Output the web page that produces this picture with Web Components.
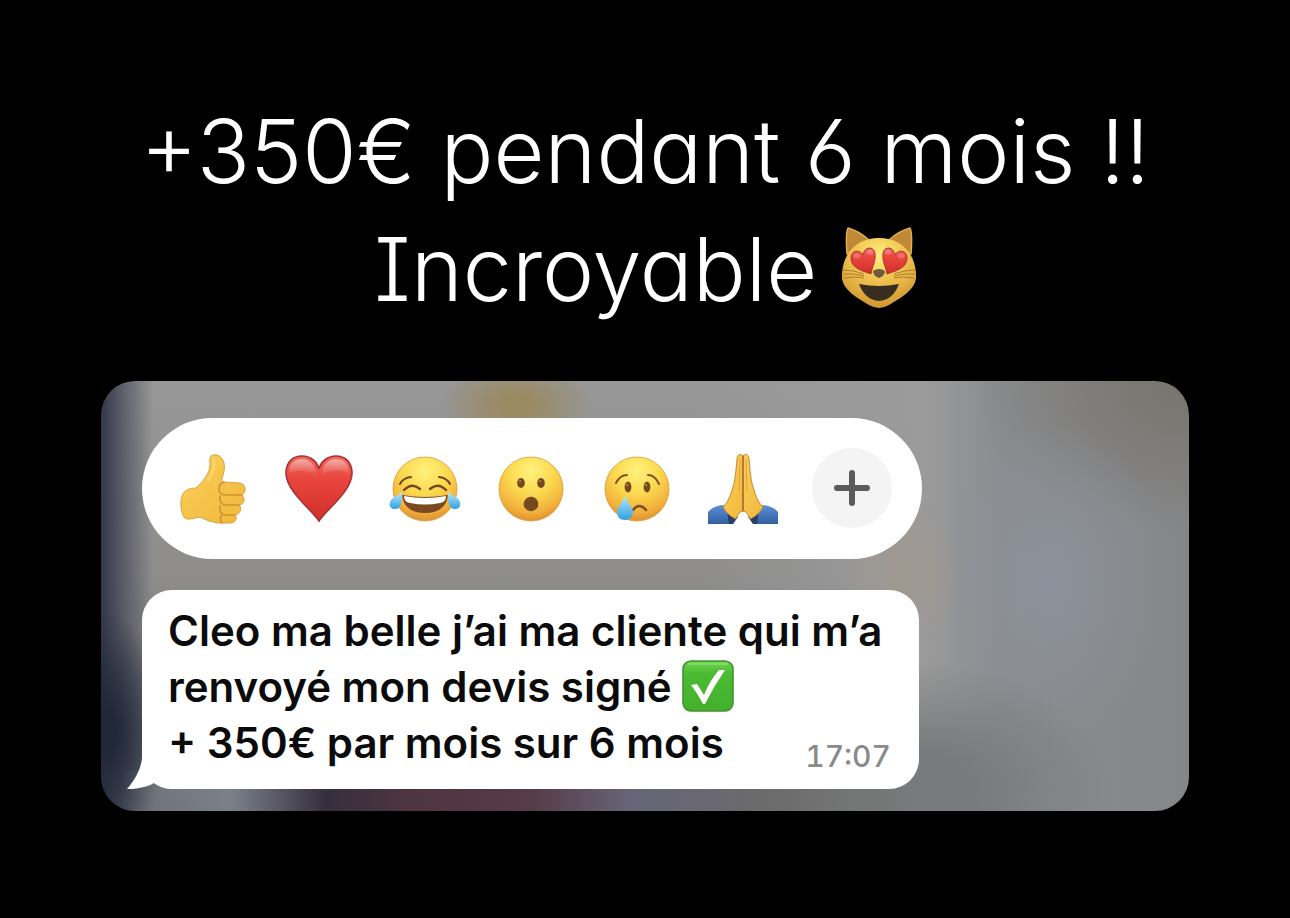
<!DOCTYPE html>
<html lang="fr">
<head>
<meta charset="utf-8">
<meta name="viewport" content="width=device-width, initial-scale=1">
<title>+350€ pendant 6 mois !!</title>
<style>
  body {
    margin: 0;
    background: #000;
  }
</style>
</head>
<body>
<story-page>
  <story-title slot="title">+350€ pendant 6 mois !!<br>Incroyable <emoji-icon name="cat" label="Chat aux yeux en cœur"></emoji-icon></story-title>
  <message-card>
    <reaction-bar></reaction-bar>
    <chat-bubble time="17:07">Cleo ma belle j’ai ma cliente qui m’a<br>renvoyé mon devis signé <emoji-icon name="check" label="Validé"></emoji-icon><br>+ 350€ par mois sur 6 mois</chat-bubble>
  </message-card>
</story-page>

<script>
/* Shared gradients, cloned into every icon's own shadow root */
const DEFS = `
  <defs>
    <radialGradient id="face" cx="50%" cy="22%" r="80%">
      <stop offset="0" stop-color="#fff27c"/>
      <stop offset=".45" stop-color="#fbd84e"/>
      <stop offset=".8" stop-color="#f2b03c"/>
      <stop offset="1" stop-color="#dc8b2c"/>
    </radialGradient>
    <radialGradient id="fur" cx="50%" cy="25%" r="75%">
      <stop offset="0" stop-color="#fff083"/>
      <stop offset=".4" stop-color="#f3ca55"/>
      <stop offset="1" stop-color="#cf962f"/>
    </radialGradient>
    <linearGradient id="red" x1="0" y1="0" x2="0" y2="1">
      <stop offset="0" stop-color="#ee6b62"/>
      <stop offset=".35" stop-color="#e9463e"/>
      <stop offset="1" stop-color="#cf2f2a"/>
    </linearGradient>
    <linearGradient id="gloss" x1="0" y1="0" x2="0" y2="1">
      <stop offset="0" stop-color="#fff" stop-opacity=".45"/>
      <stop offset="1" stop-color="#fff" stop-opacity="0"/>
    </linearGradient>
    <linearGradient id="hand" x1="0" y1="0" x2="1" y2="1">
      <stop offset="0" stop-color="#fbd05a"/>
      <stop offset="1" stop-color="#f1b73c"/>
    </linearGradient>
    <linearGradient id="tear" x1="0" y1="0" x2="0" y2="1">
      <stop offset="0" stop-color="#b9ecfb"/>
      <stop offset="1" stop-color="#2f9fe0"/>
    </linearGradient>
    <linearGradient id="sleeve" x1="0" y1="0" x2="0" y2="1">
      <stop offset="0" stop-color="#5c8fd8"/>
      <stop offset="1" stop-color="#32609f"/>
    </linearGradient>
    <linearGradient id="green" x1="0" y1="0" x2="0" y2="1">
      <stop offset="0" stop-color="#6fd54f"/>
      <stop offset=".25" stop-color="#4bbb33"/>
      <stop offset="1" stop-color="#43b02c"/>
    </linearGradient>
  </defs>`;

const ICONS = {
  thumb: `
    <path fill="url(#hand)" stroke="#d9a33a" stroke-width="1" stroke-linejoin="round" d="M7 43C4 48 4 59 8 66Q10 69 14 68L24 66Q33 71 42 72L55 72C61 71 61 66 59 64C65 63 66 56 63 54C69 53 69 47 66 44C71 41 70 32 63 32L47 31Q45 30 46 27C48 22 49 17 48 12C46 5 41 3 37 4C33 5 34 9 34 14C34 22 27 31 20 37Q10 37 7 43Z"/>
    <g fill="none" stroke="#cf9430" stroke-width="1.6" stroke-linecap="round">
      <path d="M66 44H49Q43 43 43 38Q43 33 48 31"/>
      <path d="M63 54H49Q43 53 44 45"/>
      <path d="M59 64H49Q43 63 44 55"/>
      <path d="M46 72Q43 68 46 64"/>
    </g>
    <path d="M38 8Q39 20 32 29" fill="none" stroke="#ffe17d" stroke-width="3" stroke-linecap="round" opacity=".5"/>`,
  heart: `
    <path d="M37 70C29 58 4 40 4 22C4 11 11 5 20 5C28 5 35 10 37 18C39 10 46 5 54 5C63 5 70 11 70 22C70 40 45 58 37 70Z" fill="url(#red)" stroke="#a92f32" stroke-width="1.6"/>
    <path d="M7 22C7 11 14 8 20 8C28 8 33 14 35 24Q20 16 7 22Z" fill="url(#gloss)"/>
    <path d="M39 24C41 14 46 8 54 8C60 8 67 11 67 22Q54 16 39 24Z" fill="url(#gloss)"/>`,
  joy: `
    <circle cx="37" cy="38" r="32" fill="url(#face)" stroke="#d99a38" stroke-width=".8"/>
    <g fill="none" stroke="#74461d" stroke-linecap="round">
      <path d="M12 33Q15 27 23 26M51 26Q59 27 62 33" stroke-width="2"/>
      <path d="M16 39Q24 31 32 38M42 38Q50 31 58 39" stroke-width="2.4"/>
    </g>
    <path d="M14 44Q37 48 60 44Q58 62 37 62Q16 62 14 44Z" fill="#7a4a22"/>
    <path d="M16 45Q37 49 58 45Q58 51 52 52Q37 55 22 52Q16 51 16 45Z" fill="#fff"/>
    <path d="M14 41C14 50 14 58 7 58C0 58 0 50 6 46Q11 44 14 41Z" fill="url(#tear)"/>
    <path d="M60 41C60 50 60 58 67 58C74 58 74 50 68 46Q63 44 60 41Z" fill="url(#tear)"/>`,
  wow: `
    <circle cx="37" cy="38" r="32" fill="url(#face)" stroke="#d99a38" stroke-width=".8"/>
    <g fill="#74491d">
      <ellipse cx="27" cy="32" rx="3.8" ry="5"/>
      <ellipse cx="47" cy="32" rx="3.8" ry="5"/>
      <ellipse cx="37" cy="53" rx="7.4" ry="7.2"/>
    </g>
    <g fill="#a87634"><circle cx="26" cy="30" r="1.3"/><circle cx="46" cy="30" r="1.3"/></g>`,
  cry: `
    <circle cx="37" cy="38" r="32" fill="url(#face)" stroke="#d99a38" stroke-width=".8"/>
    <g fill="none" stroke="#7b5120" stroke-width="2" stroke-linecap="round">
      <path d="M16 32Q20 24 27 24M48 24Q55 24 59 33"/>
      <path d="M33 59Q39 51 46 59" stroke-width="2.6"/>
    </g>
    <g fill="#74491d"><ellipse cx="28" cy="36" rx="3.4" ry="5.4"/><ellipse cx="47" cy="36" rx="3.4" ry="5.4"/></g>
    <g fill="#b17d38"><circle cx="27" cy="34" r="1.2"/><circle cx="46" cy="34" r="1.2"/></g>
    <path d="M25 44C26 50 33 56 33 61C33 66 29 69 25 69C20 69 17 66 17 61C17 55 24 50 25 44Z" fill="url(#tear)"/>`,
  pray: `
    <path d="M2 61Q8 54 19 54L29 65L27 73H2Z" fill="url(#sleeve)"/>
    <path d="M72 61Q66 54 55 54L45 65L47 73H72Z" fill="url(#sleeve)"/>
    <path d="M21 60L32 66L27 73H23ZM53 60L42 66L47 73H51Z" fill="#253f66"/>
    <g fill="url(#hand)" stroke="#c8872c" stroke-width="1">
      <path d="M37 5C34 2 31 4 31 8C30 20 29 30 27 36C24 46 22 51 17 56Q21 64 30 68Q32 61 37 60Z"/>
      <path d="M37 5C40 2 43 4 43 8C44 20 45 30 47 36C50 46 52 51 57 56Q53 64 44 68Q42 61 37 60Z"/>
    </g>
    <path d="M37 5V60" stroke="#a9682a" stroke-width="1.4" fill="none"/>
    <path d="M34 8L33 40M40 8L41 40" stroke="#d99b38" stroke-width=".8" fill="none"/>`,
  cat: `
    <g fill="#c08937" stroke="#e0ae4c" stroke-width="1.5" stroke-linejoin="round">
      <path d="M5 27C4 14 4 5 6 1Q17 4 27 13Z"/>
      <path d="M69 27C70 14 70 5 68 1Q57 4 47 13Z"/>
    </g>
    <path d="M37 11C57 11 72 23 74 46C76 62 60 70 47 78Q37 84 27 78C14 70 -2 62 0 46C2 23 17 11 37 11Z" fill="url(#fur)"/>
    <g fill="none" stroke="#a0742d" stroke-width=".9">
      <path d="M1 43Q12 43 22 47M1 47Q12 46 22 49M2 51Q13 49 22 51M73 43Q62 43 52 47M73 47Q62 46 52 49M72 51Q61 49 52 51"/>
    </g>
    <path d="M17 57Q37 61 57 57Q51 73 37 74Q23 73 17 57Z" fill="#382d20"/>
    <path d="M31 44Q37 40 43 44Q43 49 37 51Q31 49 31 44Z" fill="#6e5a3c"/>
    <g fill="url(#red)" stroke="#b52d2c" stroke-width="1">
      <path d="M29 47C22 44 9 42 9 31C9 23 18 22 21 28C22 20 32 18 33 27C34 34 30 40 29 47Z"/>
      <path d="M45 47C52 44 65 42 65 31C65 23 56 22 53 28C52 20 42 18 41 27C40 34 44 40 45 47Z"/>
    </g>
    <g fill="#fff" opacity=".2"><ellipse cx="15" cy="29" rx="3.5" ry="2.5"/><ellipse cx="28" cy="25" rx="3" ry="2.5"/><ellipse cx="46" cy="25" rx="3" ry="2.5"/><ellipse cx="59" cy="29" rx="3.5" ry="2.5"/></g>`,
  check: `
    <rect x="1" y="1" width="50" height="50" rx="8" fill="url(#green)" stroke="#429335" stroke-width="1.6"/>
    <path d="M7 4H45" stroke="#a0e886" stroke-width="2" stroke-linecap="round" opacity=".5"/>
    <path d="M9 25L15 24L22 35Q28 20 37 10L43 10Q32 26 23 44H21Q16 34 9 25Z" fill="#fff"/>`
};

/* Drawing boxes, by icon name; the reactions all use 74 x 74 */
const BOXES = { cat: [74, 82], check: [52, 52] };

class EmojiIcon extends HTMLElement {
  constructor() {
    super();
    this.attachShadow({ mode: 'open' });
  }

  connectedCallback() {
    const name = this.getAttribute('name');
    const [width, height] = BOXES[name] || [74, 74];
    this.shadowRoot.innerHTML = `
      <style>
        :host {
          display: inline-block;
          line-height: 0;
        }
        :host([name="cat"]) {
          vertical-align: -8px;
        }
        :host([name="check"]) {
          vertical-align: -10px;
        }
        svg {
          display: block;
        }
      </style>
      <svg width="${width}" height="${height}" viewBox="0 0 ${width} ${height}" role="img" aria-label="${this.getAttribute('label')}">
        ${DEFS}${ICONS[name]}
      </svg>
    `;
  }
}

class StoryPage extends HTMLElement {
  constructor() {
    super();
    this.attachShadow({ mode: 'open' }).innerHTML = `
      <style>
        :host {
          display: flex;
          flex-direction: column;
          gap: 53px;
          box-sizing: border-box;
          min-height: 100vh;
          padding: 92px 101px;
          background: #000;
        }
      </style>
      <slot name="title"></slot>
      <slot></slot>
    `;
  }
}

class StoryTitle extends HTMLElement {
  constructor() {
    super();
    this.attachShadow({ mode: 'open' }).innerHTML = `
      <style>
        :host {
          display: block;
        }
        h1 {
          margin: 0;
          color: #fff;
          font-family: Inter, Lato, sans-serif;
          font-size: 88px;
          font-weight: 300;
          /* open six, serifed capital i, single-storey a */
          font-feature-settings: "cv03", "cv08", "cv11";
          line-height: 118px;
          text-align: center;
        }
      </style>
      <h1><slot></slot></h1>
    `;
  }
}

class MessageCard extends HTMLElement {
  constructor() {
    super();
    this.attachShadow({ mode: 'open' }).innerHTML = `
      <style>
        :host {
          display: flex;
          flex-direction: column;
          align-items: flex-start;
          gap: 31px;
          padding: 37px 41px 22px;
          border-radius: 34px;
          /* Out-of-focus wallpaper: colour patches over a grey base */
          background:
            linear-gradient(90deg, #7b818900 20px, #7b8189 130px, #352f3d 225px, #4f3541 310px, #573b47 430px, #666577 530px, #6c6c6b 680px, #6c6c6b00 815px) 0 100% / 100% 40px no-repeat,
            radial-gradient(ellipse 75px 46px at 415px 24px, #9a8a62 20%, #9a8a6200),
            radial-gradient(ellipse 190px 130px at 820px 410px, #787a7b 30%, #787a7b00),
            radial-gradient(ellipse 60px 70px at 805px 195px, #a0988f, #a0988f00),
            radial-gradient(ellipse 120px 160px at 950px 200px, #8c919b, #8c919b00),
            radial-gradient(ellipse 220px 150px at 100% 0, #78736c, #78736c00),
            radial-gradient(ellipse 70px 120px at 0 350px, #212838 20%, #21283800),
            linear-gradient(90deg, #34374a, #34374a00 52px),
            linear-gradient(90deg, #9b9b9b00 600px, #9b9b9b 820px, #8a8c8f 900px, #858688),
            linear-gradient(180deg, #979797, #8e8d8c 45%, #6a6e75);
        }
      </style>
      <slot></slot>
    `;
  }
}

class ReactionBar extends HTMLElement {
  constructor() {
    super();
    this.attachShadow({ mode: 'open' });
  }

  connectedCallback() {
    const reactions = [
      ['thumb', 'Pouce levé'],
      ['heart', 'Cœur'],
      ['joy', 'Mort de rire'],
      ['wow', 'Surpris'],
      ['cry', 'Triste'],
      ['pray', 'Merci']
    ];
    this.shadowRoot.innerHTML = `
      <style>
        :host {
          display: flex;
          align-items: center;
          gap: 32px;
          box-sizing: border-box;
          height: 141px;
          padding: 0 30px 2px 34px;
          border-radius: 71px;
          background: #fff;
        }
        button {
          flex: none;
          padding: 0;
          border: 0;
          background: none;
          cursor: pointer;
        }
        emoji-icon {
          display: block;
        }
        .more {
          display: grid;
          place-items: center;
          width: 80px;
          height: 80px;
          border-radius: 50%;
          background: #f4f4f4;
        }
      </style>
      ${reactions.map(([name, label]) => `
        <button type="button" aria-label="${label}"><emoji-icon name="${name}" label="${label}"></emoji-icon></button>
      `).join('')}
      <button type="button" class="more" aria-label="Plus de réactions">
        <svg width="38" height="38" viewBox="0 0 38 38" aria-hidden="true">
          <path d="M19 4V34M4 19H34" stroke="#5b5b5b" stroke-width="6" stroke-linecap="round"/>
        </svg>
      </button>
    `;
  }
}

class ChatBubble extends HTMLElement {
  constructor() {
    super();
    this.attachShadow({ mode: 'open' });
  }

  connectedCallback() {
    this.shadowRoot.innerHTML = `
      <style>
        :host {
          position: relative;
          display: flex;
          justify-content: space-between;
          align-items: flex-end;
          box-sizing: border-box;
          width: 777px;
          max-width: 100%;
          padding: 13px 28px 18px 26px;
          border-radius: 30px;
          background: #fff;
          font-family: Inter, "Liberation Sans", sans-serif;
        }
        p {
          flex: 1;
          margin: 0;
          color: #0b0b0b;
          font-size: 42px;
          font-weight: 600;
          line-height: 56px;
          white-space: nowrap;
        }
        time {
          width: 0;
          display: flex;
          justify-content: flex-end;
          color: #8a8a8a;
          font-size: 30px;
          font-weight: 500;
          font-variant-numeric: tabular-nums;
          line-height: 30px;
        }
        /* Tail over the card, at the bubble's bottom left corner */
        .tail {
          position: absolute;
          left: -15px;
          bottom: 0;
        }
      </style>
      <p><slot></slot></p>
      <time>${this.getAttribute('time')}</time>
      <svg class="tail" width="45" height="40" viewBox="0 0 45 40" aria-hidden="true">
        <path d="M15 0V9C14 20 8 31 0 40C10 40 20 38 27 34Q34 39 45 40V0Z" fill="#fff"/>
      </svg>
    `;
  }
}

customElements.define('emoji-icon', EmojiIcon);
customElements.define('story-page', StoryPage);
customElements.define('story-title', StoryTitle);
customElements.define('message-card', MessageCard);
customElements.define('reaction-bar', ReactionBar);
customElements.define('chat-bubble', ChatBubble);
</script>
</body>
</html>
